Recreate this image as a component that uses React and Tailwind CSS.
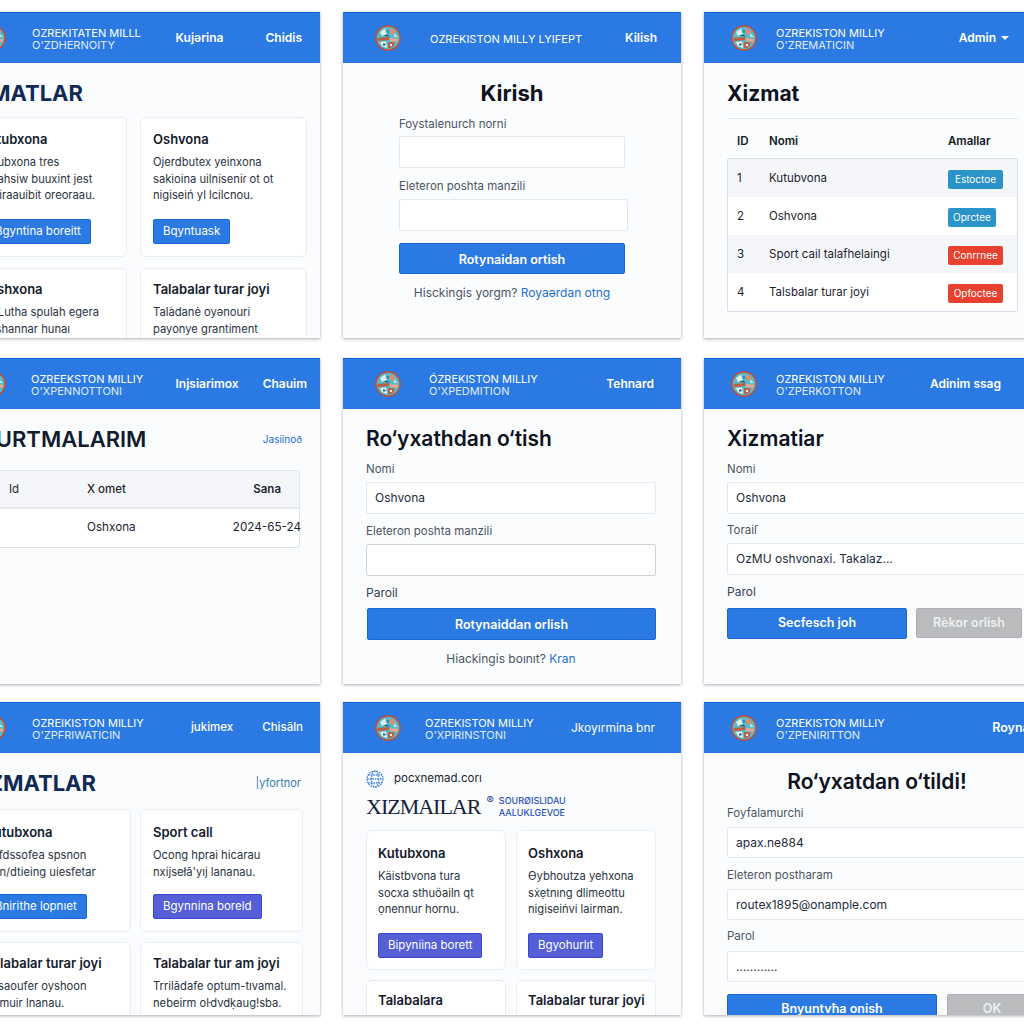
import React from "react";

function Logo() {
  return (
    <svg width="26" height="26" viewBox="0 0 26 26" className="shrink-0">
      <circle cx="13" cy="13" r="12.8" fill="#cf4a2a" />
      <circle cx="13" cy="13" r="11.3" fill="#58b9c9" />
      <path d="M5 7 L10 3.5 L12 9 L7 11 Z" fill="#d9f0f0" />
      <path d="M15 3 L20 6 L18 10 L15 8 Z" fill="#e58a6c" />
      <path d="M11 5 L14 5 L14 8 L12 8 Z" fill="#2f93ad" />
      <path d="M19 8 L23 12 L19 12 Z" fill="#bfe6e6" />
      <path d="M2.5 13 L14 12 L14 15 L3 16 Z" fill="#c65a3c" />
      <path d="M15 13 L23.5 14 L22 17 L15 16 Z" fill="#e9a68c" />
      <path d="M5 17 L11 16.5 L12 23 L7 21 Z" fill="#f2f6f4" />
      <path d="M13 17 L20 17.5 L18 22 L13 23.5 Z" fill="#b9604a" />
      <path d="M8 11 L12 9.5 L15 11.5 Z" fill="#1e5f74" />
      <rect x="8" y="18.5" width="2.5" height="2" fill="#1e5f74" />
      <rect x="15" y="19" width="2" height="2" fill="#e4f2f0" />
    </svg>
  );
}

function Panel({ wide, h, logoPl = "pl-[32px]", titleX, line1, line2, nav, navGap = "gap-[42px]", pr, children }) {
  return (
    <div
      className={`${wide ? "w-[372px]" : "w-[338px]"} ${h} shrink-0 bg-[#fbfcfe] shadow-[0_1px_3px_rgba(40,50,70,0.4)] overflow-hidden`}
    >
      <div className={`h-[51px] bg-[#2b7ae4] border-t border-[#0f62d8] flex items-center ${logoPl} ${pr}`}>
        <Logo />
        <div className={`${titleX} mt-[2px] text-white text-[11px] leading-[12.5px] whitespace-nowrap`}>
          <div>{line1}</div>
          {line2 && <div className="opacity-85">{line2}</div>}
        </div>
        <div className={`ml-auto flex items-center ${navGap} text-white text-[12px] font-semibold whitespace-nowrap`}>{nav}</div>
      </div>
      {children}
    </div>
  );
}

function Card({ title, lines, button, indigo, cardH, pad = "px-[12px] pt-[12px]", gap = "mt-[15px]", btnPos = "" }) {
  return (
    <div className={`${cardH} bg-white border border-[#e8edf5] rounded-[6px] ${pad} overflow-hidden`}>
      <div className="text-[13px] leading-[18px] font-semibold text-[#141b2b] whitespace-nowrap">{title}</div>
      <div className="mt-[6px] text-[11.2px] leading-[16.5px] text-[#2a3342] whitespace-nowrap">
        {lines.map((l) => (
          <div key={l}>{l}</div>
        ))}
      </div>
      {button && (
        <div
          className={`${gap} ${btnPos} inline-block h-[25px] px-[9px] rounded-[2px] border text-[11.5px] leading-[23px] text-white whitespace-nowrap ${
            indigo ? "bg-[#5560d8] border-[#3a46d0]" : "bg-[#2b7ae4] border-[#1a68d4]"
          }`}
        >
          {button}
        </div>
      )}
    </div>
  );
}

function Field({ label, value, mt, w = "w-full", labelMt = "mb-[5px]", strong, inputH = "h-[32px]" }) {
  return (
    <div className={mt}>
      <div className={`text-[11.5px] leading-[16px] text-[#4b5563] ${labelMt}`}>{label}</div>
      <div
        className={`${w} ${inputH} bg-white rounded-[2px] border ${
          strong ? "border-[#cdd3db]" : "border-[#e2e8f2]"
        } pl-[8px] flex items-center text-[12px] text-[#222b3a] whitespace-nowrap`}
      >
        {value}
      </div>
    </div>
  );
}

function ServiceTable() {
  const rows = [
    ["1", "Kutubvona", "Estoctoe", "w-[55px] bg-[#2a93c9]", "bg-[#f4f6f9]"],
    ["2", "Oshvona", "Oprctee", "w-[48px] bg-[#2a93c9]", "bg-white"],
    ["3", "Sport cail talafhelaingi", "Conrrnee", "w-[55px] bg-[#e8412f]", "bg-[#f4f6f9]"],
    ["4", "Talsbalar turar joyi", "Opfoctee", "w-[55px] bg-[#e8412f]", "bg-white"],
  ];
  return (
    <div className="mt-[12px] mx-[23px]">
      <div className="border-t border-[#e6eaf0] h-[40px] pt-[6px] grid grid-cols-[32px_179px_auto] items-center pl-[10px] text-[11.5px] font-semibold text-[#111827]">
        <div>ID</div>
        <div>Nomi</div>
        <div>Amallar</div>
      </div>
      <div className="w-[291px] border border-[#d8dfea] rounded-[2px] bg-white">
        {rows.map((r) => (
          <div key={r[0]} className={`h-[38px] pt-[2px] grid grid-cols-[32px_179px_auto] items-center pl-[9px] text-[11.5px] text-[#1c2330] ${r[4]}`}>
            <div>{r[0]}</div>
            <div className="whitespace-nowrap overflow-hidden">{r[1]}</div>
            <div className={`${r[3]} h-[19px] rounded-[2px] text-white text-[10px] leading-[19px] text-center`}>{r[2]}</div>
          </div>
        ))}
      </div>
    </div>
  );
}

function OrdersTable() {
  return (
    <div className="mt-[18px] ml-[20px] w-[332px] border border-[#dfe5ee] rounded-[2px] bg-white">
      <div className="h-[38px] pt-[2px] bg-[#f4f6f9] border-b-2 border-[#e8ecf2] grid grid-cols-[78px_1fr_auto] items-center pl-[40px] text-[11.5px] text-[#1c2330]">
        <div>Id</div>
        <div className="font-medium">X omet</div>
        <div className="pr-[18px] font-semibold">Sana</div>
      </div>
      <div className="h-[38px] grid grid-cols-[78px_1fr_auto] items-center pl-[40px] text-[11.7px] text-[#1c2330]">
        <div></div>
        <div>Oshxona</div>
        <div className="-mr-[2px]">2024-65-24</div>
      </div>
    </div>
  );
}

function PrimaryButton({ children, className }) {
  return (
    <div className={`${className} shrink-0 bg-[#2b7ae4] border border-[#1a68d4] rounded-[2px] text-white text-[12.5px] font-semibold flex items-center justify-center whitespace-nowrap`}>
      {children}
    </div>
  );
}

function GrayButton({ children, className }) {
  return (
    <div className={`${className} shrink-0 bg-[#b9bbbd] border border-[#adafb2] rounded-[2px] text-[#eef0f2] text-[12.5px] font-semibold flex items-center justify-center whitespace-nowrap`}>
      {children}
    </div>
  );
}

function Globe() {
  return (
    <svg width="18" height="18" viewBox="0 0 18 18" fill="none" stroke="#3f86d8" strokeWidth="1.3" strokeDasharray="1.6 1">
      <circle cx="9" cy="9" r="8" />
      <ellipse cx="9" cy="9" rx="3.6" ry="8" />
      <path d="M1 9h16M2 5h14M2 13h14" />
    </svg>
  );
}

export default function App() {
  return (
    <div className="w-[1024px] h-[1024px] overflow-hidden bg-white font-['Inter','Noto_Sans',sans-serif]">
      <div className="flex gap-[23px] -ml-[52px] pt-[12px] w-[1100px]">
        <Panel
          wide
          h="h-[326px]"
          titleX="ml-[26px]"
          line1="OZREKITATEN MILLL"
          line2="O'ZDHERNOITY"
          pr="pr-[18px]"
          nav={[<span key="a">Kujərina</span>, <span key="b">Chidis</span>]}
        >
          <div className="pl-[12px] pr-[13px] pt-[17px]">
            <div className="-ml-[7px] text-[22px] leading-[26px] font-bold text-[#0f2a55]">XIZMATLAR</div>
            <div className="mt-[11px] grid grid-cols-[167px_167px] gap-x-[13px] gap-y-[11px]">
              <Card title="Kutubxona" cardH="h-[140px]" pad="pl-[19px] pt-[12px]" btnPos="ml-[5px]" lines={["Kutubxona tres", "Kutahsiw buuxint jest", "oshiraauibit oreoraau."]} button="Bgyntina boreitt" />
              <Card title="Oshvona" cardH="h-[140px]" lines={["Ojerdbutex yeinxona", "sakioina uilniseniɾ ot ot", "nigiseiń yl lcilcnou."]} button="Bqyntuask" />
              <Card title="Oshxona" cardH="h-[140px]" pad="pl-[26px] pt-[11px]" lines={["K'Lutha spulah egera", "Oshannar hunaı"]} />
              <Card title="Talabalar turar joyi" cardH="h-[140px]" pad="px-[12px] pt-[11px]" lines={["Talàdanė oyənouri", "payonye grantiment"]} />
            </div>
          </div>
        </Panel>

        <Panel
          h="h-[326px]"
          titleX="ml-[29px]"
          line1="OZREKISTON MILLY LYIFEPT"
          pr="pr-[24px]"
          nav={<span>Kilish</span>}
        >
          <div className="pl-[56px] pt-[17px]">
            <div className="pr-[56px] text-center text-[22px] leading-[26px] font-bold text-[#0d1220]">Kirish</div>
            <Field mt="mt-[10px]" label="Foystalenurch norni" w="w-[226px]" labelMt="mb-[4px]" />
            <Field mt="mt-[10px]" label="Eleteron poshta manzili" w="w-[229px]" />
            <PrimaryButton className="mt-[12px] w-[226px] h-[31px] pt-[3px]">Rotynaidan ortish</PrimaryButton>
            <div className="mt-[11px] w-[226px] text-center text-[12px] leading-[16px] text-[#4b5563] whitespace-nowrap">
              Hisckingis yorgm? <span className="text-[#1f6fd6]">Royaərdan otng</span>
            </div>
          </div>
        </Panel>

        <Panel
          h="h-[326px]"
          logoPl="pl-[27px]"
          titleX="ml-[19px]"
          line1="OZREKISTON MILLIY"
          line2="O'ZREMATICIN"
          pr="pr-[33px]"
          nav={
            <span className="flex items-center gap-[5px]">
              Admin
              <span className="w-0 h-0 border-x-[4px] border-x-transparent border-t-[4px] border-t-white"></span>
            </span>
          }
        >
          <div className="pt-[18px] pl-[23px] text-[21px] leading-[26px] font-bold text-[#0d1220]">Xizmat</div>
          <div className="-mt-[1px]">
            <ServiceTable />
          </div>
        </Panel>
      </div>

      <div className="flex gap-[23px] -ml-[52px] mt-[20px] w-[1100px]">
        <Panel
          wide
          h="h-[326px]"
          titleX="ml-[25px]"
          line1="OZREEKSTON MILLIY"
          line2="O'XPENNOTTONI"
          pr="pr-[13px]"
          navGap="gap-[24px]"
          nav={[<span key="a">Injsiarimox</span>, <span key="b">Chauim</span>]}
        >
          <div className="pt-[17px] pl-[12px] pr-[18px] flex items-center justify-between">
            <div className="ml-[20px] text-[22px] leading-[26px] font-semibold text-[#111c2e]">XURTMALARIM</div>
            <div className="text-[10px] text-[#1f6fd6]">Jasiinoð</div>
          </div>
          <OrdersTable />
        </Panel>

        <Panel
          h="h-[326px]"
          titleX="ml-[28px]"
          line1="ÓZREKISTON MILLIY"
          line2="O'XPEDMITION"
          pr="pr-[27px]"
          nav={<span>Tehnard</span>}
        >
          <div className="pl-[23px] pr-[25px] pt-[17px]">
            <div className="text-[21px] leading-[26px] font-semibold text-[#0d1220] whitespace-nowrap">Ro‘yxathdan o‘tish</div>
            <Field mt="mt-[9px]" label="Nomi" value="Oshvona" />
            <Field mt="mt-[9px]" label="Eleteron poshta manzili" strong />
            <div className="mt-[9px] text-[12px] leading-[16px] text-[#374151]">Paroil</div>
            <PrimaryButton className="mt-[7px] ml-[1px] h-[32px] pt-[3px]">Rotynaiddan orlish</PrimaryButton>
            <div className="mt-[11px] text-center text-[12px] leading-[16px] text-[#4b5563]">
              Hiackingis boınıt? <span className="text-[#1f6fd6]">Kran</span>
            </div>
          </div>
        </Panel>

        <Panel
          h="h-[326px]"
          logoPl="pl-[27px]"
          titleX="ml-[19px]"
          line1="OZREKISTON MILLIY"
          line2="O'ZPERKOTTON"
          pr="pr-[41px]"
          nav={<span>Adinim ssag</span>}
        >
          <div className="pl-[23px] pr-[8px] pt-[17px]">
            <div className="text-[21px] leading-[26px] font-semibold text-[#0d1220]">Xizmatiar</div>
            <Field mt="mt-[9px]" label="Nomi" value="Oshvona" />
            <Field mt="mt-[8px]" label="Toraiſ" value="OzMU oshvonaxi. Takalaz..." />
            <div className="mt-[9px] text-[12px] leading-[16px] text-[#374151]">Parol</div>
            <div className="mt-[8px] flex gap-[9px]">
              <PrimaryButton className="w-[180px] h-[31px]">Secfesch joh</PrimaryButton>
              <GrayButton className="w-[106px] h-[30px]">Rèkor orlish</GrayButton>
            </div>
          </div>
        </Panel>
      </div>

      <div className="flex gap-[23px] -ml-[52px] mt-[18px] w-[1100px]">
        <Panel
          wide
          h="h-[313px]"
          titleX="ml-[26px]"
          line1="OZREIKISTON MILLIY"
          line2="O'ZPFRIWATICIN"
          pr="pr-[17px]"
          navGap="gap-[29px]"
          nav={[
            <span key="a" className="font-medium text-[11.5px]">jukimex</span>,
            <span key="b" className="font-medium text-[11.5px]">Chisāln</span>,
          ]}
        >
          <div className="pt-[17px] pl-[20px] pr-[19px] flex items-center justify-between">
            <div className="-ml-[2px] text-[22px] leading-[26px] font-bold text-[#0f2a55]">XIZMATLAR</div>
            <div className="text-[11px] text-[#3a7ca8]">|yfortnor</div>
          </div>
          <div className="mt-[13px] ml-[20px] grid grid-cols-[163px_163px] gap-x-[9px] gap-y-[10px]">
            <Card title="Kutubxona" cardH="h-[123px]" pad="pl-[16px] pt-[13px]" gap="mt-[14px]" lines={["Kufdssofea spsnon", "Osn/dtieing uiesfetar"]} button="Bnirithe lopnıet" />
            <Card title="Sport call" cardH="h-[123px]" pad="px-[12px] pt-[13px]" gap="mt-[14px]" indigo lines={["Ocong hprai hicarau", "nxijsełā'yıj lananau."]} button="Bgynnina boreld" />
            <Card title="Talabalar turar joyi" cardH="h-[123px]" pad="pl-[16px] pt-[11px]" lines={["Kiisaoufer oyshoon", "Osmuir lnanau."]} />
            <Card title="Talabalar tur am joyi" cardH="h-[123px]" pad="px-[12px] pt-[11px]" lines={["Trrilādafe optum-tıvamal.", "nebeirm oŀdvdḳaug!sba."]} />
          </div>
        </Panel>

        <Panel
          h="h-[313px]"
          titleX="ml-[24px]"
          line1="OZREKISTON MILLIY"
          line2="O'XPIRINSTONI"
          pr="pr-[26px]"
          nav={<span className="font-normal">Jkoyırmina bnr</span>}
        >
          <div className="pl-[23px] pr-[25px] pt-[17px]">
            <div className="flex items-center gap-[10px] h-[18px] text-[11.5px] text-[#1c2330]">
              <Globe />
              <span>pocxnemad.corı</span>
            </div>
            <div className="mt-[7px] flex items-start h-[24px]">
              <div className="font-['Liberation_Serif',serif] text-[22px] leading-[24px] tracking-[-1px] text-[#16213a]">XIZMAILAR</div>
              <div className="ml-[6px] text-[11px] leading-[11px] text-[#1c3f8a]">®</div>
              <div className="ml-[5px] text-[9px] leading-[12px] font-medium text-[#1f4fc0] whitespace-nowrap">
                <div>SOURØISLIDAU</div>
                <div>AALUKLGEVOE</div>
              </div>
            </div>
            <div className="mt-[11px] grid grid-cols-[140px_140px] gap-x-[10px] gap-y-[10px]">
              <Card title="Kutubxona" cardH="h-[140px]" pad="px-[11px] pt-[13px]" indigo lines={["Käistbvona tura", "socxa sthuöailn qt", "ọnennur hornu."]} button="Bipyniina borett" />
              <Card title="Oshxona" cardH="h-[140px]" pad="px-[11px] pt-[13px]" indigo lines={["Өybhoutza yehxona", "sẋẹtnıng dlimeottu", "nigiseiṅvi lairman."]} button="Bgyohurlıt" />
              <Card title="Talabalara" cardH="h-[140px]" pad="px-[11px] pt-[10px]" lines={["Ixxiviza enu"]} />
              <Card title="Talabalar turar joyi" cardH="h-[140px]" pad="px-[11px] pt-[10px]" lines={["Ixxiviza enu"]} />
            </div>
          </div>
        </Panel>

        <Panel
          h="h-[313px]"
          logoPl="pl-[27px]"
          titleX="ml-[19px]"
          line1="OZREKISTON MILLIY"
          line2="O'ZPENIRITTON"
          pr="pr-[0px]"
          nav={<span className="text-[12.5px] -mr-[10px]">Roynatish</span>}
        >
          <div className="pl-[23px] pr-[8px] pt-[16px]">
            <div className="pr-[7px] text-center text-[21px] leading-[26px] font-semibold text-[#0d1220] whitespace-nowrap">Ro‘yxatdan o‘tildi!</div>
            <Field mt="mt-[10px]" label="Foyfalamurchi" value="apax.ne884" labelMt="mb-[6px]" inputH="h-[31px]" />
            <Field mt="mt-[9px]" label="Eleteron postharam" value="routex1895@onample.com" labelMt="mb-[6px]" inputH="h-[31px]" />
            <Field mt="mt-[8px]" label="Parol" value="............" labelMt="mb-[7px]" inputH="h-[31px]" />
            <div className="mt-[12px] flex gap-[10px]">
              <PrimaryButton className="w-[210px] h-[31px]">Bnyuntvħa onish</PrimaryButton>
              <GrayButton className="w-[90px] h-[31px]">OK</GrayButton>
            </div>
          </div>
        </Panel>
      </div>
    </div>
  );
}
